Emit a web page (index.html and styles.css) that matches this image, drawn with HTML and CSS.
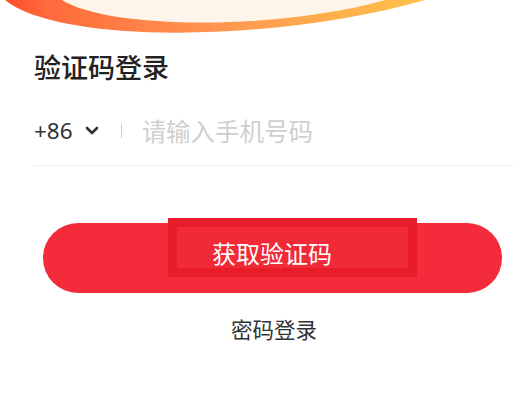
FILE: index.html
```html
<!DOCTYPE html>
<html lang="zh">
<head>
<meta charset="utf-8">
<link rel="stylesheet" href="styles.css">
</head>
<body>
<div class="banner">
  <svg width="514" height="40" viewBox="0 0 514 40">
    <defs>
      <linearGradient id="g" x1="0" y1="0" x2="1" y2="0">
        <stop offset="0" stop-color="#ff4d26"/>
        <stop offset="0.1" stop-color="#ff6a3c"/>
        <stop offset="0.5" stop-color="#ff9650"/>
        <stop offset="1" stop-color="#ffc24a"/>
      </linearGradient>
    </defs>
    <path d="M62,0 C110,30 280,30 385,0 Z" fill="#fdf5ea"/>
    <text x="76" y="-2" class="bannertext">登 录 新 人 福 利 领 取 券 包</text>
    <path d="M5,0 C60,45 280,42 425,0 L385,0 C280,30 110,30 62,0 Z" fill="url(#g)"/>
  </svg>
</div>
<main class="page">
  <h1 class="title">验证码登录</h1>
  <div class="phone-row">
    <span class="code">+86</span>
    <svg class="chev" width="14" height="10" viewBox="0 0 14 10"><path d="M2,2 L7,7 L12,2" fill="none" stroke="#333" stroke-width="2.6" stroke-linecap="round" stroke-linejoin="round"/></svg>
    <span class="sep"></span>
    <span class="placeholder">请输入手机号码</span>
  </div>
  <div class="btn-wrap">
    <div class="btn">
      <div class="btn-hl"><span class="btn-text">获取验证码</span></div>
    </div>
  </div>
  <div class="alt">密码登录</div>
</main>
</body>
</html>
```
FILE: styles.css
```css
html, body {
  margin: 0;
  padding: 0;
  background: #fff;
  font-family: "Noto Sans CJK SC", "Noto Sans", sans-serif;
}
.banner {
  height: 40px;
  overflow: hidden;
}
.banner svg { display: block; }
.bannertext {
  font-size: 20px;
  fill: #dcb894;
  letter-spacing: 2px;
}
.page {
  padding-left: 34px;
}
.title {
  margin: 9px 0 0 0;
  font-size: 27px;
  line-height: 36px;
  font-weight: 500;
  color: #222;
}
.phone-row {
  display: flex;
  align-items: center;
  height: 68px;
  margin-top: 13px;
  border-bottom: 1px solid #efefef;
  box-sizing: border-box;
  padding-bottom: 2px;
}
.code {
  font-family: "Noto Sans", sans-serif;
  font-size: 22.5px;
  color: #333;
}
.chev {
  margin-left: 12px;
  margin-top: 1px;
}
.sep {
  width: 1px;
  height: 14px;
  background: #ccc;
  margin-left: 22px;
}
.placeholder {
  margin-left: 20px;
  font-size: 24.5px;
  color: #cfcfcf;
}
.btn-wrap {
  padding-top: 57px;
  padding-left: 9px;
}
.btn {
  position: relative;
  width: 459px;
  height: 70px;
  border-radius: 35px;
  background: #f32b3b;
}
.btn-hl {
  position: absolute;
  left: 125px;
  top: -5px;
  width: 231px;
  height: 41px;
  border: 9px solid #e91c29;
  background: #f12a38;
}
.btn-text {
  position: absolute;
  left: 35px;
  top: 11px;
  font-size: 24px;
  line-height: 30px;
  color: #fff;
  white-space: nowrap;
}
.alt {
  margin-top: 20px;
  text-align: center;
  font-size: 21.5px;
  color: #333;
}
```
